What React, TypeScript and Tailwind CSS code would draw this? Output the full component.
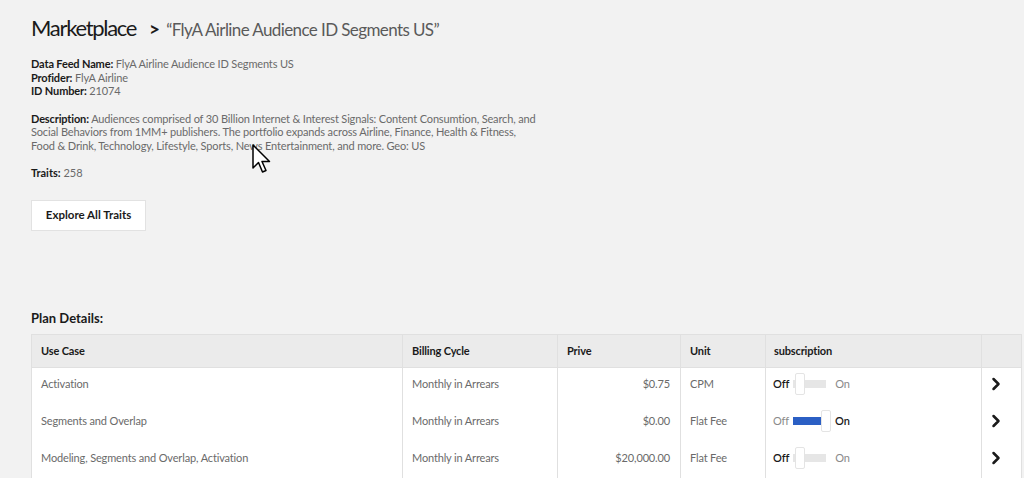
import { ChevronRight } from "lucide-react"

type Plan = {
  useCase: string
  billing: string
  price: string
  unit: string
  on: boolean
}

const plans: Plan[] = [
  { useCase: "Activation", billing: "Monthly in Arrears", price: "$0.75", unit: "CPM", on: false },
  { useCase: "Segments and Overlap", billing: "Monthly in Arrears", price: "$0.00", unit: "Flat Fee", on: true },
  {
    useCase: "Modeling, Segments and Overlap, Activation",
    billing: "Monthly in Arrears",
    price: "$20,000.00",
    unit: "Flat Fee",
    on: false
  }
]

function Toggle({ on }: { on: boolean }) {
  return (
    <div className="flex items-center gap-[4px] text-[11px]">
      <span className={on ? "text-[#8a8a8a]" : "font-semibold text-[#1a1a1a]"}>Off</span>
      <div className="relative h-[22px] w-[38px]">
        <div
          className={
            on
              ? "absolute left-0 top-[7px] h-[8px] w-[30px] bg-[#2b5fc4]"
              : "absolute left-0 top-[7px] h-[8px] w-[33px] bg-[#e6e6e6]"
          }
        />
        <div
          className={
            on
              ? "absolute left-[28px] top-0 h-[22px] w-[10px] rounded-[2px] border border-[#e4e4e4] bg-white"
              : "absolute left-[2px] top-0 h-[22px] w-[10px] rounded-[2px] border border-[#e4e4e4] bg-white"
          }
        />
      </div>
      <span className={on ? "font-semibold text-[#1a1a1a]" : "text-[#8a8a8a]"}>On</span>
    </div>
  )
}

export default function App() {
  return (
    <div className="relative h-[478px] w-[1024px] overflow-hidden bg-[#f2f2f2] font-['Lato','Open_Sans',sans-serif] text-[#1f1f1f]">
      <div className="px-[31px] pt-[11px]">
        {/* Titre */}
        <div className="flex items-baseline">
          <h1 className="text-[22px] font-normal tracking-[-1.3px] text-[#1a1a1a]">Marketplace</h1>
          <span className="ml-[13px] text-[19px] font-bold text-[#1a1a1a]">&gt;</span>
          <span className="ml-[6px] text-[17px] tracking-[-0.6px] text-[#5a5a5a]">
            “FlyA Airline Audience ID Segments US”
          </span>
        </div>

        {/* Infos */}
        <div className="mt-[13px] text-[11px] leading-[13.5px] tracking-[-0.15px] text-[#6a6a6a]">
          <p>
            <b className="text-[#1a1a1a]">Data Feed Name:</b> FlyA Airline Audience ID Segments US
          </p>
          <p>
            <b className="text-[#1a1a1a]">Profider:</b> FlyA Airline
          </p>
          <p>
            <b className="text-[#1a1a1a]">ID Number:</b> 21074
          </p>
        </div>

        <p className="mt-[14px] w-[540px] text-[11px] leading-[13.5px] tracking-[-0.15px] text-[#6a6a6a]">
          <b className="text-[#1a1a1a]">Description:</b> Audiences comprised of 30 Billion Internet &amp;
          Interest Signals: Content Consumtion, Search, and
          <br />
          Social Behaviors from 1MM+ publishers. The portfolio expands across Airline, Finance, Health &amp; Fitness,
          <br />
          Food &amp; Drink, Technology, Lifestyle, Sports, News Entertainment, and more. Geo: US
        </p>

        <p className="mt-[14px] text-[11px] leading-[13.5px] text-[#6a6a6a]">
          <b className="text-[#1a1a1a]">Traits:</b> 258
        </p>

        <button className="mt-[20px] h-[31px] w-[115px] border border-[#e2e2e2] bg-white text-[11.5px] font-bold text-[#1a1a1a]">
          Explore All Traits
        </button>

        <h2 className="mt-[78px] text-[13px] font-bold text-[#1a1a1a]">Plan Details:</h2>

        {/* Tableau */}
        <table className="mt-[6px] w-[990px] table-fixed border-collapse text-[11px] tracking-[-0.15px]">
          <colgroup>
            <col className="w-[371px]" />
            <col className="w-[155px]" />
            <col className="w-[123px]" />
            <col className="w-[85px]" />
            <col className="w-[216px]" />
            <col className="w-[40px]" />
          </colgroup>
          <thead>
            <tr className="h-[33px] bg-[#ebebeb] text-left font-bold text-[#1a1a1a]">
              <th className="border border-[#e0e0e0] px-[9px]">Use Case</th>
              <th className="border border-[#e0e0e0] px-[9px]">Billing Cycle</th>
              <th className="border border-[#e0e0e0] px-[9px]">Prive</th>
              <th className="border border-[#e0e0e0] px-[9px]">Unit</th>
              <th className="border border-[#e0e0e0] px-[8px]">subscription</th>
              <th className="border border-[#e0e0e0]" />
            </tr>
          </thead>
          <tbody className="bg-white text-[#6a6a6a]">
            {plans.map((p) => (
              <tr key={p.useCase} className="h-[37px]">
                <td className="border-x border-[#e0e0e0] px-[9px] pb-[4px]">{p.useCase}</td>
                <td className="border-x border-[#e0e0e0] px-[9px] pb-[4px]">{p.billing}</td>
                <td className="border-x border-[#e0e0e0] px-[10px] pb-[4px] text-right">{p.price}</td>
                <td className="border-x border-[#e0e0e0] px-[9px] pb-[4px]">{p.unit}</td>
                <td className="border-x border-[#e0e0e0] px-[7px] pb-[4px]">
                  <Toggle on={p.on} />
                </td>
                <td className="border-x border-[#e0e0e0] pb-[4px]">
                  <ChevronRight className="ml-[4px] h-[20px] w-[20px] text-[#1a1a1a]" strokeWidth={3} />
                </td>
              </tr>
            ))}
          </tbody>
        </table>
      </div>

      {/* Curseur de souris */}
      <svg className="absolute left-[252px] top-[144px]" width="20" height="32" viewBox="0 0 20 32">
        <path
          d="M1 1 L1 24 L6.5 18.5 L10.5 28 L14 26.5 L10 17.5 L17.5 17.5 Z"
          fill="white"
          stroke="black"
          strokeWidth="1.5"
          strokeLinejoin="round"
        />
      </svg>
    </div>
  )
}
